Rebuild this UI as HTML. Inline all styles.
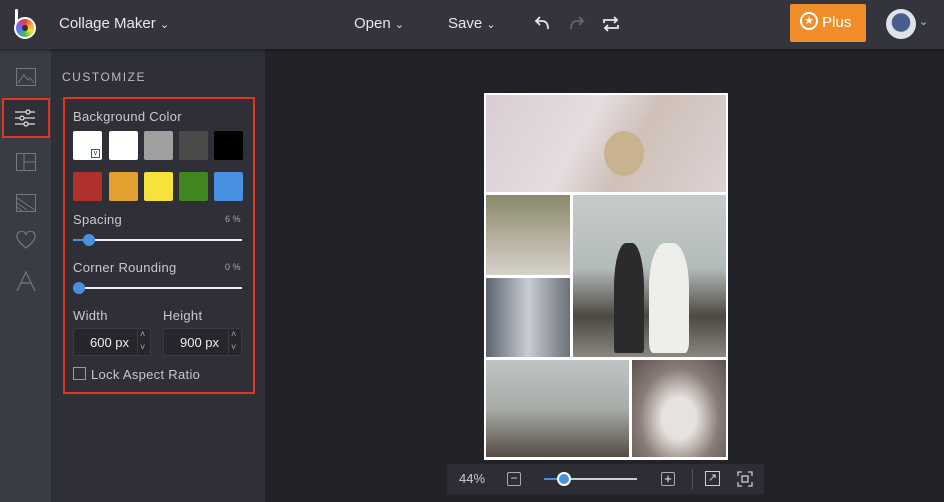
<!DOCTYPE html><html><head><style>
*{margin:0;padding:0;box-sizing:border-box}
body{width:944px;height:502px;overflow:hidden;background:#222328;font-family:"Liberation Sans",sans-serif;position:relative;color:#ddd}
.a{position:absolute}
.top{left:0;top:0;width:944px;height:49px;background:#33343c;box-shadow:0 1px 3px rgba(0,0,0,.5);z-index:2}
.rail{left:0;top:49px;width:51px;height:453px;background:#3a3c45}
.panel{left:51px;top:49px;width:214px;height:453px;background:#2e2f37}
.t{font-size:15px;color:#e8e8ea}
.lbl{font-size:13px;color:#c9c9cc;letter-spacing:.3px}
.sw{width:29px;height:29px;border-radius:2px}
.inp{background:#26272d;border:1px solid #3a3b42;border-radius:2px;height:28px;font-size:13px;color:#eee}
.ph{position:absolute}
</style></head><body>
<div class="a top">
 <div class="a" style="left:15px;top:9px;width:3px;height:22px;background:#fff;border-radius:2px"></div>
 <div class="a" style="left:14px;top:17px;width:22px;height:22px;border-radius:50%;border:2px solid #fff;background:conic-gradient(#e63a3a,#f2a23a,#f2e23a,#4fbf4f,#3a8fe6,#9a4fe6,#e63a3a)"></div>
 <div class="a" style="left:22px;top:25px;width:6px;height:6px;border-radius:50%;background:#333"></div>
 <div class="a t" style="left:59px;top:15px">Collage Maker <span style="font-size:11px">⌄</span></div>
 <div class="a t" style="left:354px;top:15px">Open <span style="font-size:11px">⌄</span></div>
 <div class="a t" style="left:448px;top:15px">Save <span style="font-size:11px">⌄</span></div>
 <svg class="a" style="left:533px;top:14px" width="20" height="20" viewBox="0 0 20 20" fill="none" stroke="#e8e8ea" stroke-width="1.8"><path d="M7 3L3 7l4 4"/><path d="M3 7h6c4 0 6 3 6 8"/></svg>
 <svg class="a" style="left:566px;top:14px" width="20" height="20" viewBox="0 0 20 20" fill="none" stroke="#666" stroke-width="1.8"><path d="M13 3l4 4-4 4"/><path d="M17 7h-6c-4 0-6 3-6 8"/></svg>
 <svg class="a" style="left:602px;top:15px" width="18" height="18" viewBox="0 0 18 18" fill="none" stroke="#e8e8ea" stroke-width="1.8"><path d="M2 8V5h13M12 2l3 3-3 3"/><path d="M16 10v3H3M6 16l-3-3 3-3"/></svg>
 <div class="a" style="left:790px;top:4px;width:76px;height:38px;background:#f08f2a;border-radius:2px;color:#fff;font-size:15px;line-height:38px;padding-left:10px"><span style="display:inline-block;width:18px;height:18px;border:2px solid #fff;border-radius:50%;font-size:11px;line-height:14px;text-align:center;vertical-align:middle;position:relative;top:-2px">★</span> Plus</div>
 <div class="a" style="left:886px;top:9px;width:30px;height:30px;border-radius:50%;background:radial-gradient(circle at 50% 45%,#4a5d8f 40%,#dfe2ea 43%)"></div>
 <div class="a" style="left:919px;top:15px;font-size:11px;color:#ccc">⌄</div>
</div>
<div class="a rail">
 <svg class="a" style="left:16px;top:19px" width="20" height="18" viewBox="0 0 20 18" fill="none" stroke="#777"><rect x=".5" y=".5" width="19" height="17"/><path d="M2 15l6-8 4 5 2-2 4 5"/></svg>
 <div class="a" style="left:2px;top:49px;width:48px;height:40px;border:2px solid #e0361f;background:#2e2f37"></div>
 <svg class="a" style="left:15px;top:60px" width="20" height="18" viewBox="0 0 20 18" fill="none" stroke="#ddd" stroke-width="1.3"><path d="M0 3h20M0 9h20M0 15h20"/><circle cx="13" cy="3" r="2" fill="#2e2f37"/><circle cx="7" cy="9" r="2" fill="#2e2f37"/><circle cx="11" cy="15" r="2" fill="#2e2f37"/></svg>
 <svg class="a" style="left:16px;top:104px" width="20" height="18" viewBox="0 0 20 18" fill="none" stroke="#777"><rect x=".5" y=".5" width="19" height="17"/><path d="M8 1v17M8 9h12"/></svg>
 <svg class="a" style="left:16px;top:145px" width="20" height="18" viewBox="0 0 20 18" fill="none" stroke="#777"><rect x=".5" y=".5" width="19" height="17"/><path d="M1 4l18 12M1 9l10 7M1 13l5 4"/></svg>
 <svg class="a" style="left:16px;top:182px" width="20" height="18" viewBox="0 0 20 18" fill="none" stroke="#777" stroke-width="1.2"><path d="M10 17C4 12 1 9 1 5.5A4.5 4.5 0 0 1 10 4a4.5 4.5 0 0 1 9 1.5C19 9 16 12 10 17z"/></svg>
 <svg class="a" style="left:16px;top:222px" width="20" height="20" viewBox="0 0 20 20" fill="none" stroke="#777" stroke-width="1.2"><path d="M1 20L10 1l9 19M5 12h10"/></svg>
</div>
<div class="a panel">
 <div class="a" style="left:11px;top:21px;font-size:12px;letter-spacing:1.5px;color:#bbb">CUSTOMIZE</div>
 <div class="a" style="left:12px;top:48px;width:192px;height:297px;border:2px solid #e0361f"></div>
 <div class="a lbl" style="left:22px;top:60px">Background Color</div>
 <div class="a sw" style="left:22px;top:82px;background:#fff"></div>
 <div class="a" style="left:40px;top:100px;width:9px;height:9px;border:1px solid #555;background:#fff;font-size:7px;line-height:7px;color:#333;text-align:center">v</div>
 <div class="a sw" style="left:58px;top:82px;background:#fff"></div>
 <div class="a sw" style="left:93px;top:82px;background:#a0a0a0"></div>
 <div class="a sw" style="left:128px;top:82px;background:#4a4a4a"></div>
 <div class="a sw" style="left:163px;top:82px;background:#000"></div>
 <div class="a sw" style="left:22px;top:123px;background:#b0302b"></div>
 <div class="a sw" style="left:58px;top:123px;background:#e4a12f"></div>
 <div class="a sw" style="left:93px;top:123px;background:#f6e23a"></div>
 <div class="a sw" style="left:128px;top:123px;background:#41861f"></div>
 <div class="a sw" style="left:163px;top:123px;background:#4a90e2"></div>
 <div class="a lbl" style="left:22px;top:163px">Spacing</div>
 <div class="a" style="left:174px;top:165px;font-size:9px;color:#aaa">6 %</div>
 <div class="a" style="left:22px;top:190px;width:169px;height:2px;background:#eee"></div>
 <div class="a" style="left:22px;top:190px;width:16px;height:2px;background:#4a8fe0"></div>
 <div class="a" style="left:32px;top:185px;width:12px;height:12px;border-radius:50%;background:#4a8fe0"></div>
 <div class="a lbl" style="left:22px;top:211px">Corner Rounding</div>
 <div class="a" style="left:174px;top:213px;font-size:9px;color:#aaa">0 %</div>
 <div class="a" style="left:22px;top:238px;width:169px;height:2px;background:#eee"></div>
 <div class="a" style="left:22px;top:233px;width:12px;height:12px;border-radius:50%;background:#4a8fe0"></div>
 <div class="a lbl" style="left:22px;top:259px">Width</div>
 <div class="a lbl" style="left:112px;top:259px">Height</div>
 <div class="a inp" style="left:22px;top:279px;width:78px"><span class="a" style="left:16px;top:6px">600 px</span><span class="a" style="left:63px;top:0;width:1px;height:26px;background:#3a3b42"></span><span class="a" style="left:66px;top:0;font-size:9px;color:#aaa">˄</span><span class="a" style="left:66px;top:13px;font-size:9px;color:#aaa">˅</span></div>
 <div class="a inp" style="left:112px;top:279px;width:79px"><span class="a" style="left:16px;top:6px">900 px</span><span class="a" style="left:64px;top:0;width:1px;height:26px;background:#3a3b42"></span><span class="a" style="left:67px;top:0;font-size:9px;color:#aaa">˄</span><span class="a" style="left:67px;top:13px;font-size:9px;color:#aaa">˅</span></div>
 <div class="a" style="left:22px;top:318px;width:13px;height:13px;border:1px solid #999"></div>
 <div class="a lbl" style="left:40px;top:318px">Lock Aspect Ratio</div>
</div>
<div class="a" style="left:484px;top:93px;width:244px;height:367px;background:#fff">
 <div class="ph" style="left:2px;top:2px;width:240px;height:97px;background:linear-gradient(120deg,#d9cdd3,#e6dde0 40%,#cfc0b8 60%,#ddd2d4)"></div>
 <div class="ph" style="left:120px;top:38px;width:40px;height:45px;border-radius:50%;background:#c9b38e"></div>
 <div class="ph" style="left:2px;top:102px;width:84px;height:80px;background:linear-gradient(180deg,#8a8a6a,#b9b4a4 60%,#d6d2cc)"></div>
 <div class="ph" style="left:2px;top:185px;width:84px;height:79px;background:linear-gradient(90deg,#5d6470,#c8cdd4 50%,#6c7078)"></div>
 <div class="ph" style="left:89px;top:102px;width:153px;height:162px;background:linear-gradient(180deg,#c5cbca,#b4bcbb 45%,#4c4842 75%,#8a8680)"></div>
 <div class="ph" style="left:165px;top:150px;width:40px;height:110px;background:#eeeeea;border-radius:40% 40% 10% 10%"></div>
 <div class="ph" style="left:130px;top:150px;width:30px;height:110px;background:#2b2a2c;border-radius:40% 40% 5% 5%"></div>
 <div class="ph" style="left:2px;top:267px;width:143px;height:97px;background:linear-gradient(180deg,#bfc4c4,#a9aca8 50%,#554c44)"></div>
 <div class="ph" style="left:148px;top:267px;width:94px;height:97px;background:radial-gradient(ellipse at 50% 60%,#e6e2de 25%,#8a7c78 60%,#5a5250)"></div>
</div>
<div class="a" style="left:447px;top:464px;width:317px;height:30px;background:#2d2e35;border-radius:2px">
 <div class="a" style="left:12px;top:7px;font-size:13px;color:#ccc">44%</div>
 <div class="a" style="left:60px;top:8px;width:14px;height:14px;border:1px solid #aaa;border-radius:2px;font-size:12px;line-height:11px;text-align:center;color:#ddd">−</div>
 <div class="a" style="left:97px;top:14px;width:93px;height:2px;background:#ccc"></div>
 <div class="a" style="left:97px;top:14px;width:18px;height:2px;background:#4a8fe0"></div>
 <div class="a" style="left:110px;top:8px;width:14px;height:14px;border-radius:50%;background:#4a8fe0;border:2px solid #fff"></div>
 <div class="a" style="left:214px;top:8px;width:14px;height:14px;border:1px solid #aaa;border-radius:2px;font-size:13px;line-height:11px;text-align:center;color:#fff">+</div>
 <div class="a" style="left:245px;top:5px;width:1px;height:20px;background:#555"></div>
 <div class="a" style="left:258px;top:7px;width:15px;height:15px;border:1px solid #ccc;font-size:11px;line-height:12px;text-align:center;color:#ddd">↗</div>
 <svg class="a" style="left:290px;top:7px" width="16" height="16" viewBox="0 0 16 16" fill="none" stroke="#ccc" stroke-width="1.3"><path d="M1 5V1h4M11 1h4v4M15 11v4h-4M5 15H1v-4"/><rect x="5" y="5" width="6" height="6"/></svg>
</div>
</body></html>
